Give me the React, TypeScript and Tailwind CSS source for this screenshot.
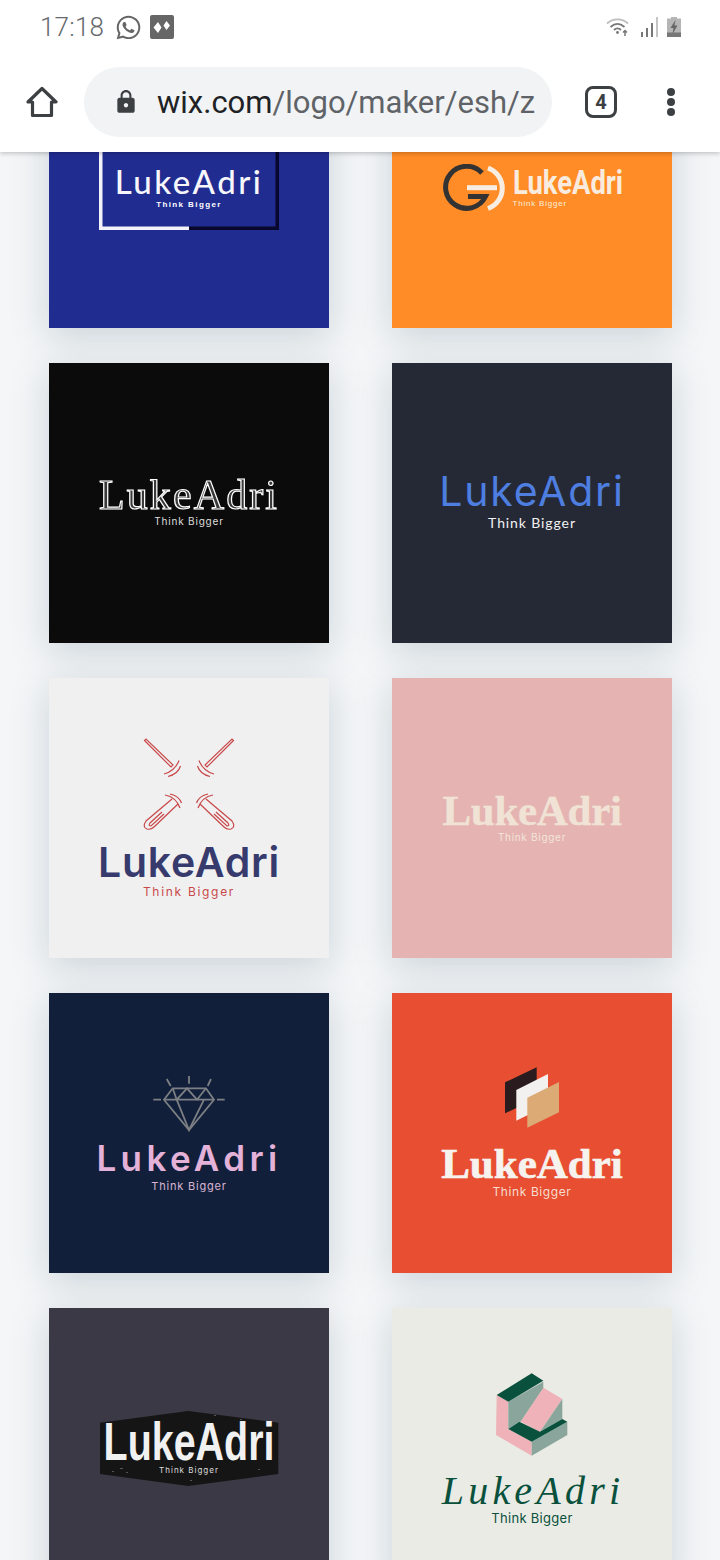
import { ReactNode } from "react"
import { FaWhatsapp } from "react-icons/fa"
import { MdLock } from "react-icons/md"

function Card({ bg, children }: { bg: string; children?: ReactNode }) {
  return (
    <div className={`h-[280px] w-[280px] flex flex-col items-center justify-center overflow-hidden shadow-[0_8px_34px_rgba(105,130,150,0.3)] ${bg}`}>
      {children}
    </div>
  )
}

function StatusBar() {
  return (
    <div className="h-[54px] flex items-center pl-[40px] pr-[39px] text-[#666a6e]">
      <span className="text-[26px] font-light leading-none tracking-[0.2px]" style={{ fontFamily: "Roboto, sans-serif" }}>17:18</span>
      <FaWhatsapp className="ml-[11px] h-[27px] w-[27px] text-[#666666]" />
      <svg viewBox="0 0 24 24" className="ml-[8px] h-[24px] w-[24px]">
        <rect width="24" height="24" rx="2" fill="#666666" />
        <path d="M8 7 L11.500 12.500 L8 18 L3.500 12.500 Z M16.500 6 L20 10.500 L16.500 15 L13.500 10.500 Z" fill="#ffffff" />
      </svg>
      <div className="ml-auto flex items-center">
        <svg viewBox="0 0 24 20" className="h-[20px] w-[24px]" fill="none" stroke="#777" strokeWidth="1.8">
          <path d="M1 6.500 C7 1 16 1 22 6.500" stroke="#bdbdbd" />
          <path d="M4.500 10 C9 6 14 6 18.500 10" />
          <path d="M8 13 C10 11 13 11 15 13" />
          <circle cx="11.500" cy="15.500" r="1.400" fill="#777" stroke="none" />
          <path d="M19 19 V14 M17 15.500 L19 13.500 L21 15.500" strokeWidth="1.500" />
        </svg>
        <svg viewBox="0 0 18 20" className="ml-[10px] h-[20px] w-[18px]" fill="#777">
          <rect x="1" y="15" width="2" height="5" />
          <rect x="6" y="11" width="2" height="9" />
          <rect x="11" y="6" width="2" height="14" />
          <rect x="16" y="0" width="2" height="20" fill="#c4c4c4" />
        </svg>
        <svg viewBox="0 0 14 20" className="ml-[9px] h-[20px] w-[14px]">
          <path d="M4 0 H10 V1.500 H14 V20 H0 V1.500 H4 Z" fill="#b5b5b5" />
          <rect x="0" y="15.500" width="14" height="4.500" fill="#777" />
          <path d="M8.500 3 L3.500 11 H6.500 L5.500 17 L10.500 8.500 H7.500 Z" fill="#666" />
        </svg>
      </div>
    </div>
  )
}

function UrlBar() {
  return (
    <div className="h-[98px] pt-[13px] pl-[26px]">
      <div className="h-[70px] flex items-center">
        <svg viewBox="0 0 32 32" fill="none" stroke="#3c4043" strokeWidth="3.200" strokeLinejoin="round" className="h-[32px] w-[32px]">
          <path d="M16 2.500 L30 16 H25.500 V29.500 H6.500 V16 H2 Z" />
        </svg>
        <div className="ml-[26px] h-[70px] w-[468px] flex items-center rounded-full bg-[#f1f3f4] pl-[29px] pr-[17px]">
          <MdLock className="h-[26px] w-[26px] shrink-0 text-[#3c4043]" />
          <div className="ml-[18px] h-[42px] w-[378px] overflow-hidden whitespace-nowrap text-[31px] leading-[43px] text-[#5f6368]" style={{ fontFamily: "Roboto, sans-serif" }}>
            <span className="text-[#202124]">wix.com</span>/logo/maker/esh/z
          </div>
        </div>
        <div className="ml-[33px] h-[32px] w-[32px] flex items-center justify-center rounded-[8px] border-[3px] border-[#3c4043] text-[20px] font-bold text-[#3c4043]" style={{ fontFamily: "Roboto, sans-serif" }}>4</div>
        <div className="ml-[50px] flex flex-col gap-[2px]">
          <span className="h-[8px] w-[8px] rounded-full bg-[#3c4043]" />
          <span className="h-[8px] w-[8px] rounded-full bg-[#3c4043]" />
          <span className="h-[8px] w-[8px] rounded-full bg-[#3c4043]" />
        </div>
      </div>
    </div>
  )
}

function FrameLogo() {
  return (
    <div className="relative h-[84px] w-[180px] flex flex-col items-center justify-end pb-[20px]">
      <svg viewBox="0 0 180 84" className="absolute inset-0 h-[84px] w-[180px]" fill="none" strokeWidth="3.500">
        <path d="M1.750 0 V82.250 H90" stroke="#f2f2f8" />
        <path d="M90 82.250 H178.250 V0" stroke="#08082c" />
      </svg>
      <div className="text-[33px] leading-[36px] font-medium tracking-[2.500px] text-[#f7f7fb]" style={{ fontFamily: "Lato, sans-serif" }}>LukeAdri</div>
      <div className="text-[8px] leading-[11px] font-bold tracking-[1.400px] text-white" style={{ fontFamily: "Liberation Sans, sans-serif" }}>Think Bigger</div>
    </div>
  )
}

function EmblemLogo() {
  return (
    <div className="flex items-center gap-[3px] pb-[1px]">
      <svg viewBox="440 164 68 48" className="h-[48px] w-[68px]" fill="none">
        <path d="M480 173 A21 21 0 1 0 483.500 196.500 H466" stroke="#333333" strokeWidth="5" />
        <path d="M486 168 A21.500 21.500 0 0 1 486 208.500" stroke="#f7ede2" strokeWidth="5" />
        <path d="M465 187.700 H495" stroke="#f7ede2" strokeWidth="5" />
      </svg>
      <div className="flex w-[110px] flex-col pb-[1px]">
        <div className="origin-left scale-x-[0.83] whitespace-nowrap text-[33px] leading-[33px] font-bold text-[#f9ecdf]" style={{ fontFamily: "Roboto, sans-serif" }}>LukeAdri</div>
        <div className="text-[8px] leading-[10px] tracking-[0.800px] text-[#f9ecdf]" style={{ fontFamily: "Liberation Sans, sans-serif" }}>Think Bigger</div>
      </div>
    </div>
  )
}

function OutlineLogo() {
  return (
    <div className="flex flex-col items-center pb-[4px]">
      <div className="text-[42px] leading-[40px] tracking-[2.100px] text-[#3a3a3a] [will-change:transform] [-webkit-text-stroke:1.2px_#ffffff]" style={{ fontFamily: "Liberation Serif, serif" }}>LukeAdri</div>
      <div className="text-[10px] leading-[13px] tracking-[0.800px] text-[#dddddd]" style={{ fontFamily: "Inter, sans-serif" }}>Think Bigger</div>
    </div>
  )
}

function ThinLogo() {
  return (
    <div className="flex flex-col items-center pb-[6px]">
      <div className="text-[41px] leading-[44px] font-normal tracking-[1.800px] text-[#4d7ee0]" style={{ fontFamily: "Inter, sans-serif" }}>LukeAdri</div>
      <div className="mt-[2px] text-[14px] leading-[16px] tracking-[0.900px] text-[#f1f1f1]" style={{ fontFamily: "Lato, sans-serif" }}>Think Bigger</div>
    </div>
  )
}

function HammersLogo() {
  return (
    <div className="flex flex-col items-center">
      <svg viewBox="140 735 98 98" className="h-[98px] w-[98px]" fill="none" stroke="#c9484a" strokeWidth="1.200">
        <g>
          <path d="M144.500 739.500 L171 766 L173 764 L146 738 Z" />
          <path d="M164 773 Q175 770 179 759.500" />
          <path d="M168 775.500 Q178 773 180.500 765" />
        </g>
        <g transform="translate(378 0) scale(-1 1)">
          <path d="M144.500 739.500 L171 766 L173 764 L146 738 Z" />
          <path d="M164 773 Q175 770 179 759.500" />
          <path d="M168 775.500 Q178 773 180.500 765" />
        </g>
        <g>
          <path d="M172 798 L146 820 Q142 826 147 828 Q151 829 154 826 L178 803" />
          <path d="M162 811 L150 822 Q148 825 151 825 L164 813" />
          <path d="M165 794 Q176 796 180 807" />
          <path d="M170 793 Q179 795 181.500 802" />
        </g>
        <g transform="translate(378 0) scale(-1 1)">
          <path d="M172 798 L146 820 Q142 826 147 828 Q151 829 154 826 L178 803" />
          <path d="M162 811 L150 822 Q148 825 151 825 L164 813" />
          <path d="M165 794 Q176 796 180 807" />
          <path d="M170 793 Q179 795 181.500 802" />
        </g>
      </svg>
      <div className="mt-[7px] text-[41px] leading-[42px] font-semibold tracking-[0.800px] text-[#363a6d]" style={{ fontFamily: "Inter, sans-serif" }}>LukeAdri</div>
      <div className="mt-[1px] text-[12px] leading-[16px] tracking-[1.700px] text-[#c9484a]" style={{ fontFamily: "Inter, sans-serif" }}>Think Bigger</div>
    </div>
  )
}

function DidotLogo() {
  return (
    <div className="flex flex-col items-center pb-[1px]">
      <div className="text-[43px] leading-[38px] font-bold tracking-[-0.300px] text-[#f0e3d6] [-webkit-text-stroke:0.4px_#f0e3d6]" style={{ fontFamily: "Liberation Serif, serif" }}>LukeAdri</div>
      <div className="mt-[1px] text-[10px] leading-[13px] tracking-[0.700px] text-[#f3e6da]" style={{ fontFamily: "Inter, sans-serif" }}>Think Bigger</div>
    </div>
  )
}

function DiamondLogo() {
  return (
    <div className="flex flex-col items-center">
      <svg viewBox="150 1073 78 58" className="h-[58px] w-[78px]" fill="none" stroke="#7c7f83" strokeWidth="1.800">
        <path d="M172.700 1087.300 H206 L214 1098.700 L189 1129 L164 1098.700 Z" />
        <path d="M164 1098.700 H214 M176.700 1098.700 L189 1129 L204 1098.700 M172.700 1087.300 L176.700 1098.700 L187 1087.300 L197 1098.700 L206 1087.300" />
        <path d="M166.700 1078 L170.700 1085 M189 1075 V1082.700 M211 1078 L207.700 1085 M153.300 1098.700 H161 M217 1098.700 H224.700" />
      </svg>
      <div className="mt-[7px] text-[35px] leading-[38px] font-semibold tracking-[4.400px] text-[#e4b2d8]" style={{ fontFamily: "Inter, sans-serif" }}>LukeAdri</div>
      <div className="mt-[2px] text-[11px] leading-[14px] tracking-[0.800px] text-[#d8b5d2]" style={{ fontFamily: "Inter, sans-serif" }}>Think Bigger</div>
    </div>
  )
}

function PlanesLogo() {
  return (
    <div className="flex flex-col items-center">
      <svg viewBox="503 1066 58 63" className="h-[63px] w-[58px]">
        <polygon points="505,1082.300 536.700,1067.300 536.700,1098.300 505,1113.300" fill="#2a1c1e" />
        <polygon points="516.300,1090 548,1074 548,1105 516.300,1120.700" fill="#f3f1ef" />
        <polygon points="527.300,1097.700 559,1082 559,1112.300 527.300,1127.700" fill="#dcaa74" />
      </svg>
      <div className="mt-[16px] text-[43px] leading-[38px] font-bold text-[#f6f3ef] [-webkit-text-stroke:0.7px_#f6f3ef]" style={{ fontFamily: "Liberation Serif, serif" }}>LukeAdri</div>
      <div className="mt-[1px] text-[12px] leading-[16px] tracking-[0.600px] text-[#f5ddd0]" style={{ fontFamily: "Inter, sans-serif" }}>Think Bigger</div>
    </div>
  )
}

function BadgeLogo() {
  return (
    <div className="relative h-[75px] w-[180px] flex flex-col items-center">
      <svg viewBox="99 1410 180 75" className="absolute inset-0 h-[75px] w-[180px]">
        <polygon points="100,1421.700 188.300,1410 278.300,1421.700 278.300,1473 188.300,1485 100,1473" fill="#151515" />
        <path d="M112 1470 h2 v1 h-2 z M120 1467 h3 v1 h-3 z M126 1471 h2 v1 h-2 z M240 1418 h2 v1 h-2 z M214 1414 h2 v1 h-2 z M258 1468 h2 v1 h-2 z M190 1479 h2 v1 h-2 z" fill="#555" />
      </svg>
      <div className="relative mt-[10px] w-max scale-x-[0.73] whitespace-nowrap text-[54px] leading-[40px] font-bold text-[#f1f1f1]" style={{ fontFamily: "Liberation Sans, sans-serif" }}>LukeAdri</div>
      <div className="relative mt-[4px] text-[8px] leading-[10px] tracking-[1px] text-[#dddddd]" style={{ fontFamily: "Inter, sans-serif" }}>Think Bigger</div>
    </div>
  )
}

function CubeLogo() {
  return (
    <div className="flex flex-col items-center pt-[2px]">
      <svg viewBox="495 1372 74 85" className="h-[85px] w-[74px]">
        <polygon points="496.700,1395 508.300,1401.700 508.300,1429 531.700,1441.700 531.700,1455.700 496,1435" fill="#efb2b9" />
        <polygon points="508.300,1401.700 543.300,1381.700 543.300,1388.300 520.700,1421.700 519.300,1421.700 508.300,1429" fill="#8aa69c" />
        <polygon points="543.300,1387.700 562.300,1399 540,1431.700 520.700,1421.700" fill="#efb2b9" />
        <polygon points="562.300,1399 562.300,1419 540,1431.700" fill="#8aa69c" />
        <polygon points="531.700,1441.700 567.300,1421.700 567.300,1435 531.700,1455.700" fill="#8aa69c" />
        <polygon points="496.700,1395 531.700,1373.300 543.300,1380.700 508.300,1401.700" fill="#0a513d" />
        <polygon points="519.300,1421.700 540,1431.700 562.300,1419 567.300,1421.700 531.700,1441.700 508.300,1429" fill="#0a513d" />
      </svg>
      <div className="ml-[2px] mt-[15px] text-[40px] leading-[38px] italic tracking-[4.200px] text-[#0a513d]" style={{ fontFamily: "Liberation Serif, serif" }}>LukeAdri</div>
      <div className="text-[13px] leading-[17px] tracking-[0.300px] text-[#0a513d]" style={{ fontFamily: "Inter, sans-serif" }}>Think Bigger</div>
    </div>
  )
}

export default function App() {
  return (
    <div className="relative h-[1560px] w-[720px] overflow-hidden bg-[#f4f6f7]">
      <header className="absolute inset-x-0 top-0 z-10 bg-white shadow-[0_1px_5px_rgba(0,0,0,0.25)]">
        <StatusBar />
        <UrlBar />
      </header>
      <main className="grid grid-cols-[280px_280px] gap-x-[63px] gap-y-[35px] pl-[49px] pt-[48px]">
        <Card bg="bg-[#212c91]"><FrameLogo /></Card>
        <Card bg="bg-[#ff8c26]"><EmblemLogo /></Card>
        <Card bg="bg-[#0b0b0b]"><OutlineLogo /></Card>
        <Card bg="bg-[#252936]"><ThinLogo /></Card>
        <Card bg="bg-[#f0f0f0]"><HammersLogo /></Card>
        <Card bg="bg-[#e5b3b1]"><DidotLogo /></Card>
        <Card bg="bg-[#111f3a]"><DiamondLogo /></Card>
        <Card bg="bg-[#e84e31]"><PlanesLogo /></Card>
        <Card bg="bg-[#3b3945]"><BadgeLogo /></Card>
        <Card bg="bg-[#e9ebe4]"><CubeLogo /></Card>
      </main>
    </div>
  )
}
